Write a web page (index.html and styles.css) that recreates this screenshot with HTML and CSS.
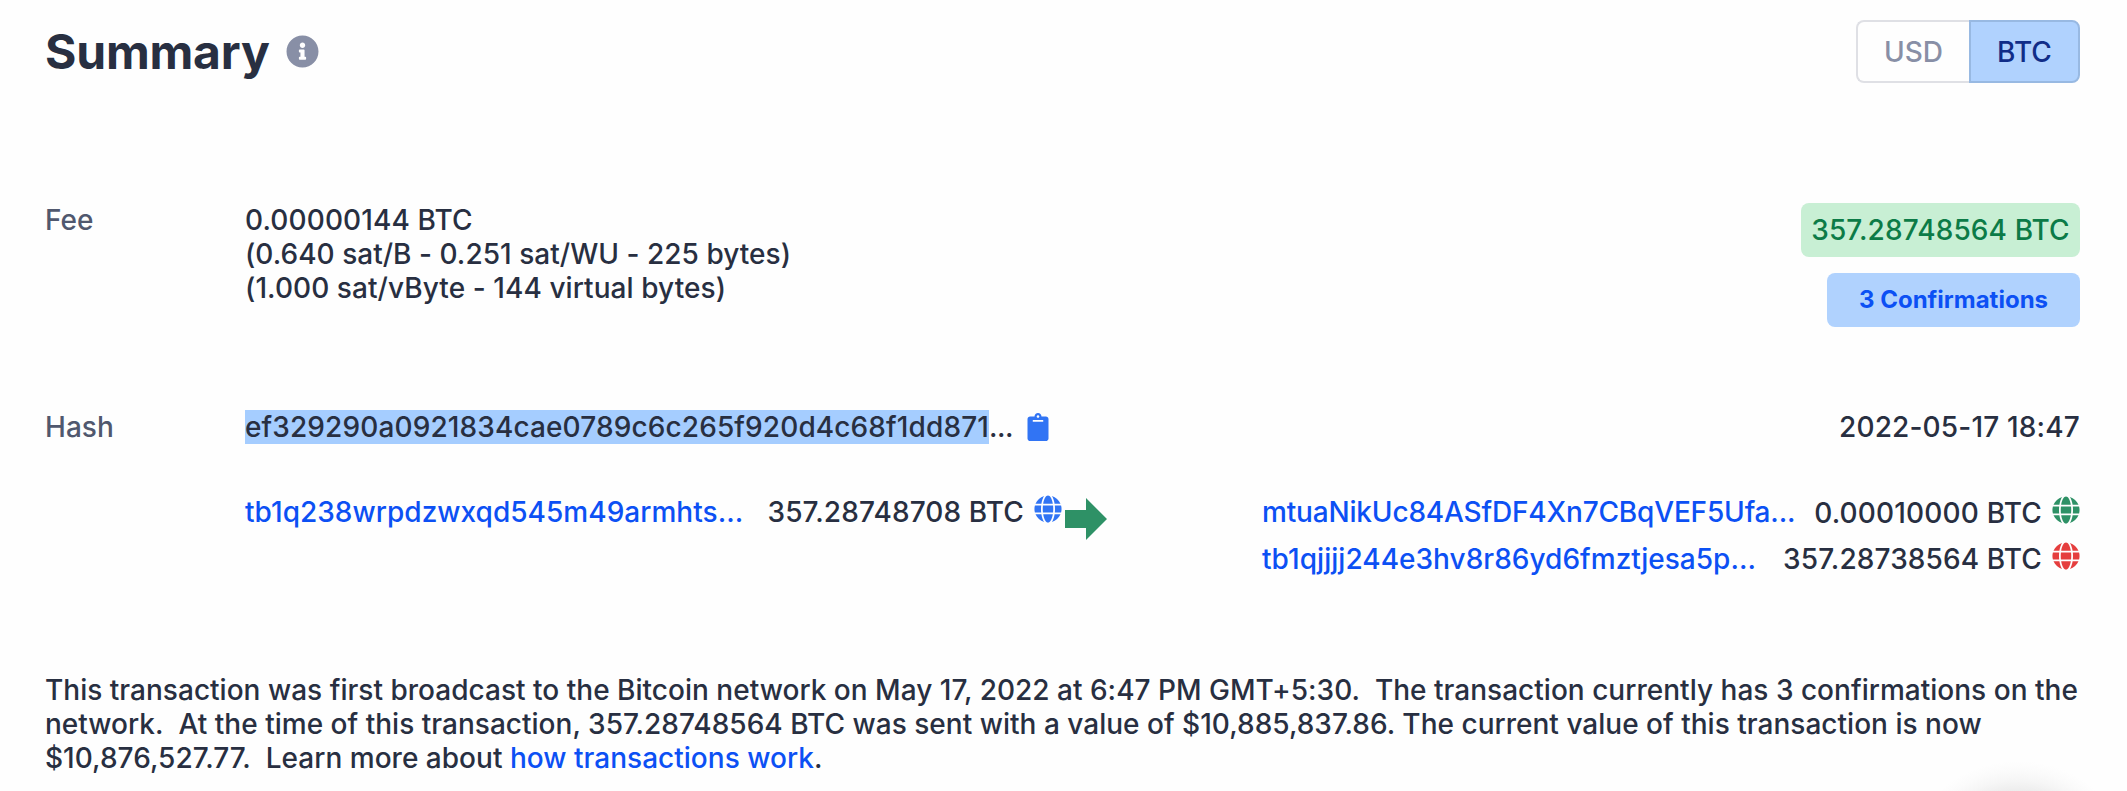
FILE: index.html
```html
<!DOCTYPE html>
<html lang="en">
<head>
<meta charset="utf-8">
<title>Transaction summary</title>
<link rel="stylesheet" href="styles.css">
</head>
<body>
<svg class="defs" aria-hidden="true">
  <symbol id="globe" viewBox="0 0 496 512">
    <path fill="currentColor" d="M336.500 160C322 70.700 287.800 8 248 8s-74 62.700-88.500 152h177zM152 256c0 22.200 1.200 43.500 3.300 64h185.300c2.100-20.500 3.300-41.800 3.300-64s-1.200-43.500-3.300-64H155.300c-2.100 20.500-3.300 41.800-3.300 64zm324.700-96c-28.600-67.900-86.500-120.400-158-141.600 24.400 33.800 41.200 84.700 50 141.600h108zM177.200 18.400C105.800 39.600 47.800 92.100 19.300 160h108c8.700-56.900 25.500-107.800 49.900-141.600zM487.400 192H372.700c2.100 21 3.300 42.500 3.300 64s-1.200 43-3.300 64h114.600c5.500-20.500 8.600-41.800 8.600-64s-3.100-43.500-8.500-64zM120 256c0-21.500 1.200-43 3.300-64H8.600C3.200 212.500 0 233.800 0 256s3.200 43.500 8.600 64h114.600c-2-21-3.200-42.500-3.200-64zm39.500 96c14.500 89.300 48.700 152 88.500 152s74-62.700 88.500-152h-177zm159.300 141.600c71.400-21.200 129.400-73.700 158-141.600h-108c-8.800 56.900-25.600 107.800-50 141.600zM19.300 352c28.600 67.900 86.500 120.400 158 141.600-24.400-33.800-41.200-84.700-50-141.600h-108z"/>
  </symbol>
</svg>
<main class="page">
  <header class="header">
    <h1 class="title">Summary</h1>
    <svg class="info" viewBox="0 0 512 512"><path fill="currentColor" d="M256 8C119 8 8 119.100 8 256c0 137 111 248 248 248s248-111 248-248C504 119.100 393 8 256 8zm0 110c23.200 0 42 18.800 42 42s-18.800 42-42 42-42-18.800-42-42 18.800-42 42-42zm56 254c0 6.600-5.400 12-12 12h-88c-6.600 0-12-5.400-12-12v-24c0-6.600 5.400-12 12-12h12v-64h-12c-6.600 0-12-5.400-12-12v-24c0-6.600 5.400-12 12-12h64c6.600 0 12 5.400 12 12v100h12c6.600 0 12 5.400 12 12v24z"/></svg>
    <div class="toggle">
      <button class="toggle-item toggle-usd">USD</button>
      <button class="toggle-item toggle-btc">BTC</button>
    </div>
  </header>

  <section class="fee">
    <div class="label">Fee</div>
    <div class="fee-values">
      <div class="numeric">0.00000144 BTC</div>
      <div>(0.640 sat/B - 0.251 sat/WU - 225 bytes)</div>
      <div class="fee-virtual">(1.000 sat/vByte - 144 virtual bytes)</div>
    </div>
    <div class="badges">
      <div class="badge badge-amount numeric">357.28748564 BTC</div>
      <div class="badge badge-confirm">3 Confirmations</div>
    </div>
  </section>

  <section class="hash">
    <div class="label">Hash</div>
    <div class="hash-value"><span class="selected numeric">ef329290a0921834cae0789c6c265f920d4c68f1dd871</span><span class="ellipsis">...</span></div>
    <svg class="clipboard" viewBox="0 0 384 512"><path fill="currentColor" d="M384 112v352c0 26.510-21.490 48-48 48H48c-26.510 0-48-21.490-48-48V112c0-26.510 21.490-48 48-48h80c0-35.290 28.710-64 64-64s64 28.710 64 64h80c26.510 0 48 21.490 48 48zM192 40c-13.255 0-24 10.745-24 24s10.745 24 24 24 24-10.745 24-24-10.745-24-24-24m96 114v-20a6 6 0 0 0-6-6H102a6 6 0 0 0-6 6v20a6 6 0 0 0 6 6h180a6 6 0 0 0 6-6z"/></svg>
    <div class="date">2022-05-17 18:47</div>
  </section>

  <section class="transfer">
    <div class="entry entry-from">
      <a class="link">tb1q238wrpdzwxqd545m49armhts...</a>
      <span class="amount numeric">357.28748708 BTC</span>
      <svg class="globe globe-blue"><use href="#globe"/></svg>
    </div>
    <svg class="arrow" viewBox="0 0 42 42"><path fill="currentColor" d="M0 12h21V0l21 21-21 21V30H0z"/></svg>
    <div class="outputs">
      <div class="entry">
        <a class="link link-tight">mtuaNikUc84ASfDF4Xn7CBqVEF5Ufa...</a>
        <span class="amount amount-first">0.00010000 BTC</span>
        <svg class="globe globe-green"><use href="#globe"/></svg>
      </div>
      <div class="entry">
        <a class="link">tb1qjjjj244e3hv8r86yd6fmztjesa5p...</a>
        <span class="amount numeric">357.28738564 BTC</span>
        <svg class="globe globe-red"><use href="#globe"/></svg>
      </div>
    </div>
  </section>

  <p class="description">This transaction was first broadcast to the Bitcoin network on May 17, 2022 at 6:47 PM GMT+5:30.&nbsp; The transaction currently has 3 confirmations on the<br>network.&nbsp; At the time of this transaction, 357.28748564 BTC was sent with a value of $10,885,837.86. The current value of this transaction is now<br>$10,876,527.77.&nbsp; Learn more about <a class="link">how transactions work</a>.</p>
</main>
<div class="float-shadow"></div>
</body>
</html>
```

FILE: styles.css
```css
* { box-sizing: border-box; }

body {
  margin: 0;
  height: 791px;
  overflow: hidden;
  position: relative;
  background: #fefefe;
  color: #282f41;
  font: 500 28px/34px Inter, sans-serif;
  letter-spacing: 0.03px;
  white-space: nowrap;
}

.defs { display: none; }
svg { flex: none; display: block; }

.page {
  padding: 20px 47px 0 45px;
}

.header {
  display: flex;
  height: 63px;
}

.title {
  margin: 3px 0 0;
  font-size: 48px;
  font-weight: 700;
  line-height: 58px;
  letter-spacing: -0.2px;
}

.info {
  width: 33px;
  height: 33px;
  margin: 15px 0 0 16px;
  color: #888fa6;
}

.toggle {
  display: flex;
  margin-left: auto;
  width: 224px;
}

.toggle-item {
  height: 63px;
  padding: 0;
  font: inherit;
  background: #fefefe;
}

.toggle-usd {
  width: 113px;
  border: 2px solid #dfe0e5;
  border-right: 0;
  border-radius: 8px 0 0 8px;
  color: #888fa6;
}

.toggle-btc {
  width: 111px;
  border: 2px solid #98b9e2;
  border-radius: 0 8px 8px 0;
  background: #b0d2fe;
  color: #102d88;
}

.label {
  width: 200px;
  flex: none;
  color: #50586e;
}

.numeric { letter-spacing: 0.12px; }

.fee {
  display: flex;
  margin-top: 120px;
}

.fee-virtual { letter-spacing: 0.07px; }

.badges {
  display: flex;
  flex-direction: column;
  align-items: flex-end;
  gap: 16px;
  margin-left: auto;
}

.badge {
  height: 54px;
  line-height: 54px;
  border-radius: 8px;
  text-align: center;
}

.badge-amount {
  width: 279px;
  background: #c8efd4;
  color: #0c7b47;
}

.badge-confirm {
  width: 253px;
  background: #b0d2fe;
  color: #0c50f4;
  font-size: 24px;
  font-weight: 700;
  letter-spacing: 0;
}

.hash {
  display: flex;
  margin-top: 83px;
}

.selected {
  display: inline-block;
  height: 34px;
  background: #a5cdff;
}

.ellipsis { letter-spacing: -0.5px; }

.clipboard {
  width: 22px;
  height: 28px;
  margin: 3px 0 0 14px;
  color: #3174f4;
}

.date {
  margin-left: auto;
  letter-spacing: 0.17px;
}

.transfer {
  display: flex;
  margin: 51px 0 0 200px;
}

.link { color: #0c50f4; }
.link-tight { letter-spacing: -0.17px; }

.entry {
  display: flex;
  height: 34px;
}

.entry-from {
  flex: none;
  width: 817px;
}

.amount { margin-left: auto; }

.amount-first {
  padding-top: 1px;
  letter-spacing: 0.17px;
}

.globe {
  width: 28px;
  height: 28px;
  margin-left: 10px;
}

.globe-blue { color: #3174f4; }
.globe-green { color: #2e9166; margin-top: 1px; }
.globe-red { color: #e53e3e; }

.arrow {
  width: 42px;
  height: 42px;
  margin: 3px 0 0 3px;
  color: #2e9166;
}

.outputs {
  display: flex;
  flex: none;
  flex-direction: column;
  gap: 13px;
  width: 818px;
  margin-left: auto;
}

.description {
  margin: 97px 0 0;
  letter-spacing: 0.018px;
}

.float-shadow {
  position: absolute;
  left: 1900px;
  bottom: 0;
  width: 227px;
  height: 33px;
  background: radial-gradient(circle 119px at 118px 122px, #ececec 74%, #f6f6f6 84%, #fbfbfb 92%, #fefefe 100%);
}
```
